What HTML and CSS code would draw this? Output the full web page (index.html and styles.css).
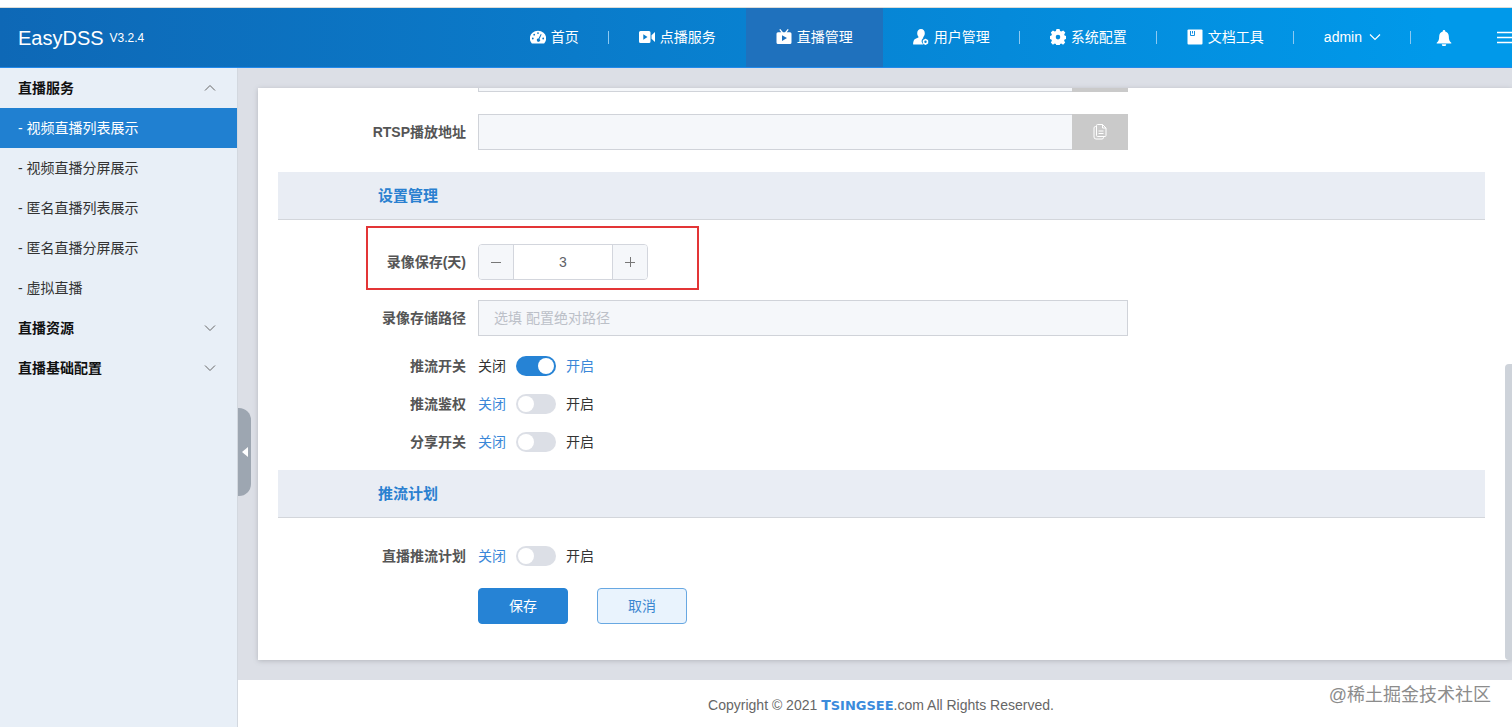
FILE: index.html
```html
<!DOCTYPE html>
<html lang="zh-CN">
<head>
<meta charset="utf-8">
<meta name="viewport" content="width=device-width, initial-scale=1">
<title>EasyDSS</title>
<link rel="stylesheet" href="styles.css">
</head>
<body>
<div class="page">
  <header class="topbar">
    <a class="brand" href="#"><span class="brand-name">EasyDSS</span><span class="brand-version">V3.2.4</span></a>
    <nav class="nav">
      <a class="nav-item divided" href="#">
        <svg class="icon" viewBox="0 0 16 16"><path fill="#fff" fill-rule="evenodd" d="M1.500 14A8.200 7.600 0 1 1 14.500 14Q14.200 14.500 13.500 14.500H2.500Q1.800 14.500 1.500 14ZM8 3.200a.9.9 0 1 0 0 1.800.9.9 0 0 0 0-1.800ZM4.200 4.800a.9.9 0 1 0 0 1.800.9.9 0 0 0 0-1.800ZM2.800 8.600a.9.9 0 1 0 0 1.800.9.9 0 0 0 0-1.800ZM13.200 8.600a.9.9 0 1 0 0 1.800.9.9 0 0 0 0-1.800ZM10.800 5.100 8.500 9.600a1.600 1.600 0 1 0 1 .4l2.100-4.500Z"/></svg>
        首页</a>
      <a class="nav-item" href="#">
        <svg class="icon" viewBox="0 0 16 16"><path fill="#fff" fill-rule="evenodd" d="M1.500 2h8.500Q11.500 2 11.500 3.500V12.500Q11.500 14 10 14H1.500Q0 14 0 12.500V3.500Q0 2 1.500 2ZM4.300 5.300v5.400l4.200-2.700ZM12.500 6.200 16 3v10l-3.500-3.200Z"/></svg>
        点播服务</a>
      <a class="nav-item active" href="#">
        <svg class="icon" viewBox="0 0 16 16"><path fill="#fff" fill-rule="evenodd" d="M3.300.8 4.300.1 7 3.200h2L11.700.1l1 .7-2 2.400H14Q15.500 3.200 15.500 4.700V13.500Q15.500 15 14 15H2Q.500 15 .500 13.500V4.700Q.500 3.200 2 3.200H5.300ZM6 6.200v5.800l5-2.900Z"/></svg>
        直播管理</a>
      <a class="nav-item divided" href="#">
        <svg class="icon" viewBox="0 0 16 16"><path fill="#fff" d="M8 0C5.600 0 4.200 1.900 4.200 4.200 4.200 6 5 7.300 5.800 8.100 5.600 9 1.800 9.400.800 11.500.300 12.700 0 14.300.200 15.500H10.500A3.800 3.800 0 0 1 10.300 9C10.200 8.700 10.200 8.400 10.200 8.100 11 7.300 11.800 6 11.800 4.200 11.800 1.900 10.400 0 8 0Z"/><circle cx="12.500" cy="12.800" r="2" fill="none" stroke="#fff" stroke-width="1.600"/><path stroke="#fff" d="M12.500 9.800v6M9.900 11.300l5.200 3M9.900 14.300l5.200-3" stroke-dasharray="1 4"/></svg>
        用户管理</a>
      <a class="nav-item divided" href="#">
        <svg class="icon" viewBox="0 0 16 16"><path fill="#fff" fill-rule="evenodd" d="M6.500 0h3l.600 2.100 1.200.500 1.900-1.100 2.100 2.100-1.100 1.900.4 1.100 1.400.400v3l-1.400.500-.500 1.200 1.100 1.900-2.100 2.100-1.900-1.100-1.100.500-.600 1.900h-3l-.600-1.900-1.100-.500-1.900 1.100L.800 13.600l1.100-1.900-.500-1.200L0 10V7l1.400-.400.500-1.100L.800 3.600l2.100-2.100 1.900 1.100L5.900 2.100ZM8 5.800a2.300 2.300 0 1 0 0 4.600 2.300 2.300 0 0 0 0-4.600Z"/></svg>
        系统配置</a>
      <a class="nav-item divided" href="#">
        <svg class="icon" viewBox="0 0 16 16"><rect x=".5" y=".5" width="15" height="15" rx="1" fill="#fff"/><path d="M3.500 2v4.500h4V2M5.500 2v2.500" fill="none" stroke="#168fdf" stroke-width="1"/></svg>
        文档工具</a>
      <a class="nav-item user divided" href="#">admin
        <svg class="chevron" viewBox="0 0 12 12"><path d="M1 3.500 6 8.500l5-5" fill="none" stroke="#fff" stroke-width="1.200"/></svg></a>
      <button class="nav-icon" type="button" aria-label="通知">
        <svg class="icon" viewBox="0 0 16 16"><path fill="#fff" d="M8 0a1.200 1.200 0 0 1 1.200 1.400C11.600 2 12.800 3.900 12.800 6.200c0 3.800.900 5.100 2.500 6.600v.700H.700v-.700C2.300 11.300 3.200 10 3.200 6.200 3.200 3.900 4.400 2 6.800 1.400A1.200 1.200 0 0 1 8 0ZM5.800 14.200h4.400a2.200 2 0 0 1-4.400 0Z"/></svg></button>
      <button class="nav-menu" type="button" aria-label="菜单">
        <svg viewBox="0 0 15 14"><path stroke="#fff" stroke-width="1.400" d="M0 2.500h15M0 7.500h15M0 12.500h15"/></svg></button>
    </nav>
  </header>

  <div class="body">
    <aside class="sidebar">
      <button class="menu-title" type="button">直播服务
        <svg class="chevron" viewBox="0 0 12 12"><path d="M1 8.500 6 3.500l5 5" fill="none" stroke="#666"/></svg></button>
      <a class="menu-item current" href="#">- 视频直播列表展示</a>
      <a class="menu-item" href="#">- 视频直播分屏展示</a>
      <a class="menu-item" href="#">- 匿名直播列表展示</a>
      <a class="menu-item" href="#">- 匿名直播分屏展示</a>
      <a class="menu-item" href="#">- 虚拟直播</a>
      <button class="menu-title" type="button">直播资源
        <svg class="chevron" viewBox="0 0 12 12"><path d="M1 3.500 6 8.500l5-5" fill="none" stroke="#666"/></svg></button>
      <button class="menu-title" type="button">直播基础配置
        <svg class="chevron" viewBox="0 0 12 12"><path d="M1 3.500 6 8.500l5-5" fill="none" stroke="#666"/></svg></button>
    </aside>

    <div class="content">
      <button class="collapse" type="button" aria-label="收起侧栏">
        <svg viewBox="0 0 6 10"><path fill="#fff" d="M6 0v10L0 5Z"/></svg></button>
      <main class="viewport">
        <form class="card">
          <div class="rows links">
            <div class="row">
              <span></span>
              <div class="copy-field"><input class="text" type="text" aria-label="播放地址" disabled><button type="button" class="copy" aria-label="复制"></button></div>
            </div>
            <div class="row">
              <label class="label" for="rtsp">RTSP播放地址</label>
              <div class="copy-field">
                <input class="text" id="rtsp" type="text" disabled>
                <button type="button" class="copy" aria-label="复制">
                  <svg class="icon" viewBox="0 0 16 16" fill="none" stroke="#fff"><path d="M5.500.500h5l3.500 3.500v7.500q0 1-1 1H5.500q-1 0-1-1V1.500q0-1 1-1ZM10.500.500V4H14M6.500 7h5M6.500 9.500h5M4.500 2.500h-1q-1.500 0-1.500 1.500v9q0 2 2 2h6q1.500 0 1.500-1.500v-1"/></svg>
                </button>
              </div>
            </div>
          </div>

          <h2 class="section">设置管理</h2>
          <div class="rows settings">
            <div class="row highlight">
              <label class="label" for="days">录像保存(天)</label>
              <div class="stepper">
                <button type="button" aria-label="减少"><svg viewBox="0 0 12 12"><path stroke="#777" d="M1 6.500h10"/></svg></button>
                <input id="days" type="text" inputmode="numeric" value="3">
                <button type="button" aria-label="增加"><svg viewBox="0 0 12 12"><path stroke="#777" d="M1 6.500h10M6.500 1v10"/></svg></button>
              </div>
            </div>
            <div class="row">
              <label class="label" for="path">录像存储路径</label>
              <input class="text" id="path" type="text" placeholder="选填 配置绝对路径">
            </div>
            <div class="switches">
              <div class="row">
                <label class="label" for="push">推流开关</label>
                <div class="toggle"><span>关闭</span><input class="switch" id="push" type="checkbox" checked><span class="chosen">开启</span></div>
              </div>
              <div class="row">
                <label class="label" for="auth">推流鉴权</label>
                <div class="toggle"><span class="chosen">关闭</span><input class="switch" id="auth" type="checkbox"><span>开启</span></div>
              </div>
              <div class="row">
                <label class="label" for="share">分享开关</label>
                <div class="toggle"><span class="chosen">关闭</span><input class="switch" id="share" type="checkbox"><span>开启</span></div>
              </div>
            </div>
          </div>

          <h2 class="section">推流计划</h2>
          <div class="rows plan">
            <div class="row">
              <label class="label" for="plan">直播推流计划</label>
              <div class="toggle"><span class="chosen">关闭</span><input class="switch" id="plan" type="checkbox"><span>开启</span></div>
            </div>
            <div class="row">
              <span></span>
              <div class="actions">
                <button class="btn primary" type="button">保存</button>
                <button class="btn" type="button">取消</button>
              </div>
            </div>
          </div>
        </form>
        <div class="scroll-thumb"></div>
      </main>
      <footer class="footer">
        <p>Copyright © 2021 <a class="logo" href="#"><span class="logo-initial">T</span>SINGSEE</a>.com All Rights Reserved.</p>
        <span class="watermark">@稀土掘金技术社区</span>
      </footer>
    </div>
  </div>
</div>
</body>
</html>
```

FILE: styles.css
```css
*, *::before, *::after { box-sizing: border-box; }

body {
  margin: 0;
  font: 14px/20px "Liberation Sans", "Noto Sans CJK SC", sans-serif;
  color: #333;
  background: #fff;
}

a { color: inherit; text-decoration: none; }
button, input { font: inherit; color: inherit; margin: 0; }
button { padding: 0; border: 0; background: none; cursor: pointer; }
svg { display: block; }

.page {
  display: flex;
  flex-direction: column;
  min-height: 100vh;
  padding-top: 7px;
}

/* Top bar */
.topbar {
  display: flex;
  justify-content: space-between;
  height: 61px;
  border-top: 1px solid #dcdcd8;
  border-bottom: 1px solid #2389ea;
  background: linear-gradient(90deg, #0e68b6, #0a7bca 38%, #0099ea 95%);
  color: #fff;
}

.brand {
  display: flex;
  align-items: center;
  gap: 6px;
  padding-left: 18px;
}
.brand-name { font-size: 20px; line-height: 24px; }
.brand-version { font-size: 12px; line-height: 24px; }

.nav { display: flex; }
.nav-item {
  position: relative;
  display: flex;
  align-items: center;
  gap: 5px;
  padding: 0 30px 2px;
  white-space: nowrap;
}
.nav-item.user { gap: 7px; }
.nav-item.active { background: #1f71bd; }
.nav-item.divided::after {
  content: "";
  position: absolute;
  right: 0;
  top: 23px;
  width: 1px;
  height: 13px;
  background: #8cc9f2;
}
.icon { width: 16px; height: 16px; }
.chevron { width: 12px; height: 12px; }
.nav-icon { padding: 0 45px 0 25px; }
.nav-menu { padding-bottom: 2px; }
.nav-menu svg { width: 15px; height: 14px; }

/* Sidebar */
.body { display: flex; flex: 1; }
.sidebar {
  flex: 0 0 238px;
  display: flex;
  flex-direction: column;
  border-right: 1px solid #d3d8df;
  background: #e8eff7;
}
.menu-title, .menu-item {
  display: flex;
  align-items: center;
  height: 40px;
  padding: 0 21px 0 18px;
}
.menu-title {
  justify-content: space-between;
  color: #111;
  font-weight: bold;
}
.menu-item.current { background: #2080d1; color: #fff; }

/* Content */
.content {
  position: relative;
  display: flex;
  flex: 1;
  flex-direction: column;
  min-width: 0;
}
.collapse {
  position: absolute;
  z-index: 1;
  left: 0;
  top: 340px;
  width: 13px;
  height: 88px;
  padding-left: 4px;
  border-radius: 0 12px 12px 0;
  background: #9da6b1;
}
.collapse svg { width: 6px; height: 10px; }
.viewport {
  position: relative;
  flex: 1;
  padding: 20px 0 20px 20px;
  background: #dcdfe6;
}
.scroll-thumb {
  position: absolute;
  top: 296px;
  right: 0;
  bottom: 20px;
  width: 7px;
  border-radius: 4px 0 0 4px;
  background: #ced3da;
}
.card {
  height: 100%;
  overflow: hidden;
  padding: 0 27px 36px 20px;
  background: #fff;
  box-shadow: 0 1px 5px #b4b7bd;
}

/* Form */
.section {
  margin: 0;
  padding: 0 100px;
  border-bottom: 1px solid #d3d6db;
  background: #e9edf4;
  color: #2a80d0;
  font-size: 15px;
  line-height: 47px;
}
.rows { display: flex; flex-direction: column; }
.links { gap: 22px; margin-top: -32px; padding-bottom: 22px; }
.settings { gap: 20px; padding: 24px 0 18px; }
.switches { display: flex; flex-direction: column; gap: 18px; }
.plan { gap: 22px; padding-top: 28px; }
.row {
  position: relative;
  display: grid;
  grid-template-columns: 200px minmax(0, 650px);
  align-items: center;
}
.label {
  padding-right: 12px;
  color: #555;
  font-weight: bold;
  text-align: right;
}
.highlight::before {
  content: "";
  position: absolute;
  left: 88px;
  top: -18px;
  width: 333px;
  height: 64px;
  border: 2px solid #e33536;
  pointer-events: none;
}
.text {
  width: 100%;
  height: 36px;
  padding: 0 15px;
  border: 1px solid #d0d3d9;
  border-radius: 0;
  background: #f5f7fa;
}
.text::placeholder { color: #bcc0c8; opacity: 1; }
.copy-field { display: flex; }
.copy-field .text { flex: 1; min-width: 0; border-right: 0; }
.copy {
  display: flex;
  flex: 0 0 56px;
  align-items: center;
  justify-content: center;
  background: #cacaca;
}

.stepper {
  display: flex;
  width: 170px;
  height: 36px;
  border: 1px solid #d3d6dd;
  border-radius: 4px;
  overflow: hidden;
}
.stepper button {
  display: flex;
  flex: 0 0 34px;
  align-items: center;
  justify-content: center;
  background: #f5f7fa;
}
.stepper svg { width: 12px; height: 12px; }
.stepper input {
  flex: 1;
  min-width: 0;
  padding: 0;
  border: solid #d3d6dd;
  border-width: 0 1px;
  color: #606266;
  text-align: center;
}

.toggle { display: flex; align-items: center; gap: 10px; }
.chosen { color: #3a87d8; }
.switch {
  appearance: none;
  display: flex;
  width: 40px;
  height: 20px;
  padding: 2px;
  border-radius: 10px;
  background: #dcdfe6;
}
.switch::before {
  content: "";
  width: 16px;
  height: 16px;
  border-radius: 50%;
  background: #fff;
}
.switch:checked { justify-content: flex-end; background: #2683d5; }

.actions { display: flex; gap: 29px; }
.btn {
  width: 90px;
  height: 36px;
  border: 1px solid #68a8e2;
  border-radius: 4px;
  background: #e9f3fd;
  color: #3c87d0;
}
.btn.primary { border-color: #2683d5; background: #2683d5; color: #fff; }

/* Footer */
.footer {
  position: relative;
  height: 47px;
  padding: 15px 0 12px 12px;
  color: #666;
  text-align: center;
}
.footer p { margin: 0; }
.logo {
  color: #3b8bdc;
  font: bold 13px/20px "DejaVu Sans", sans-serif;
}
.logo-initial { font-size: 14px; }
.watermark {
  position: absolute;
  right: 21px;
  bottom: 20px;
  color: #8c8c8c;
  font-size: 18px;
  line-height: 24px;
}
```
